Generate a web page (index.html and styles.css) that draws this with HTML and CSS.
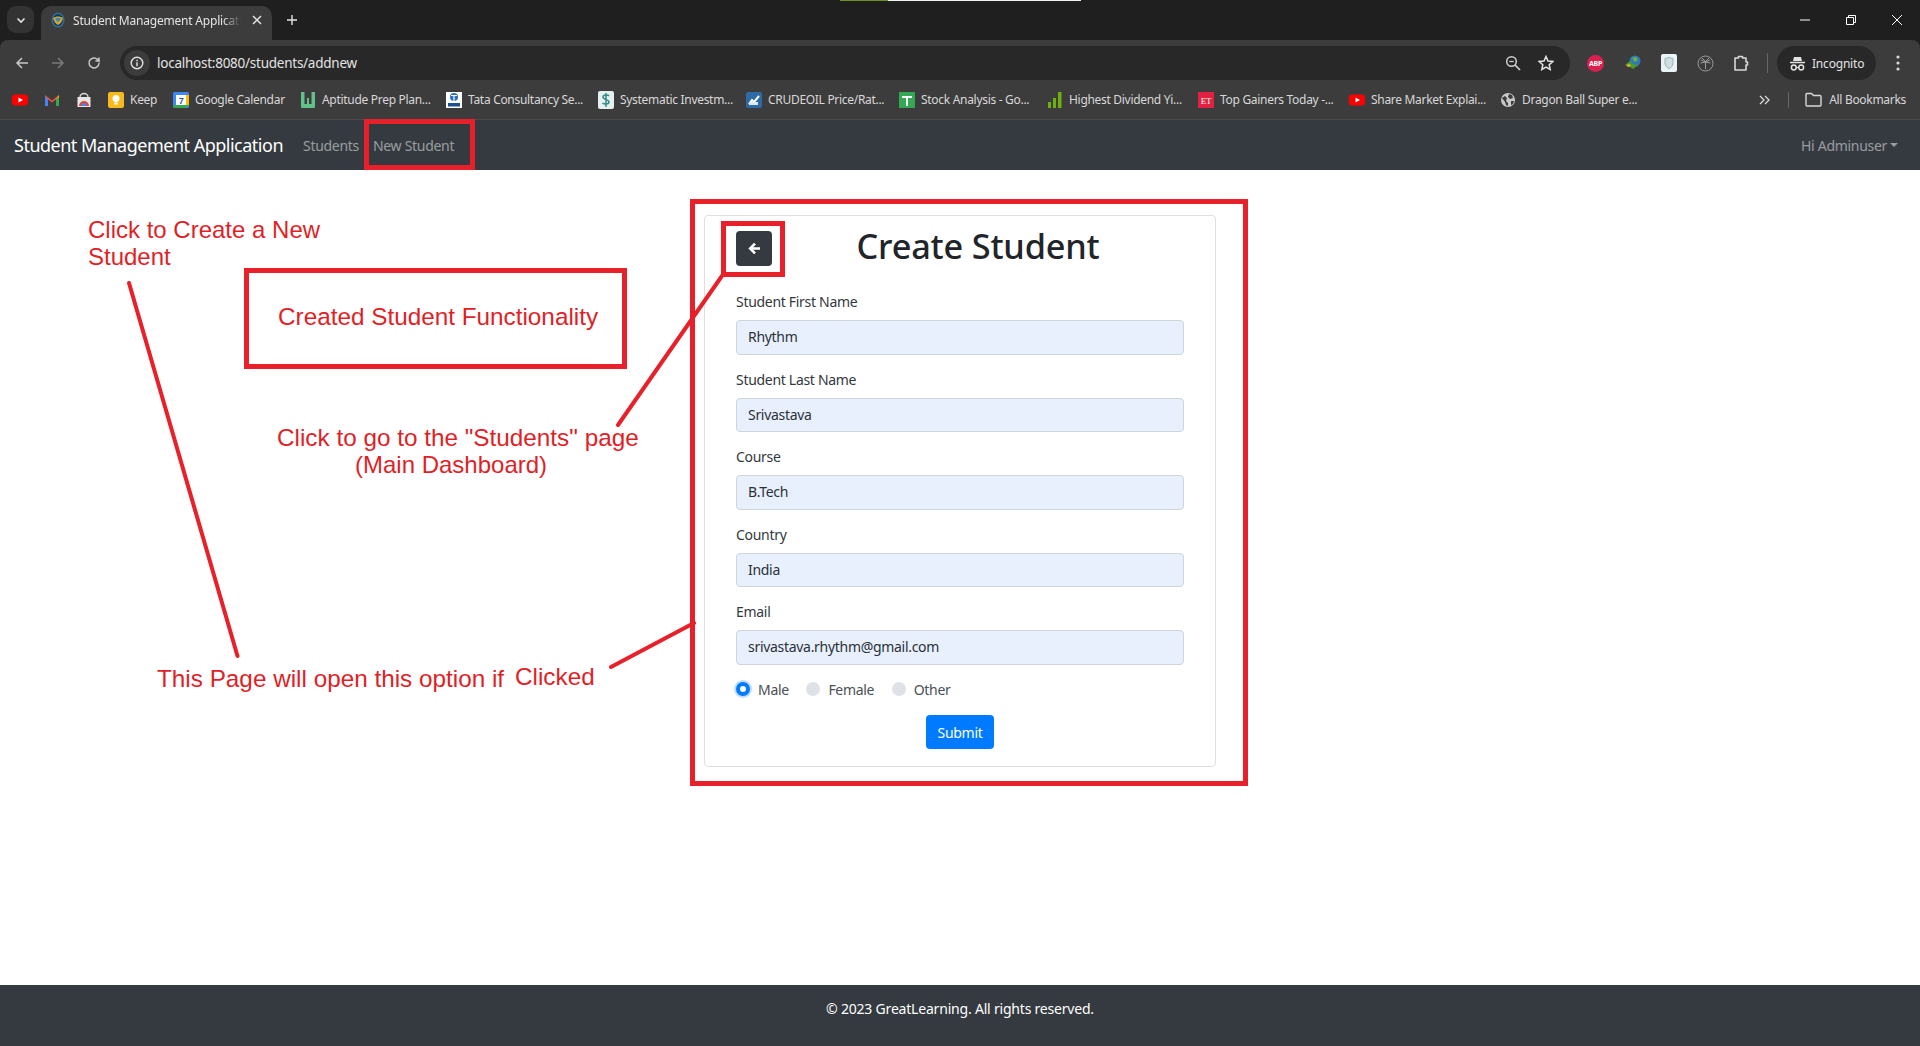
FILE: index.html
```html
<!DOCTYPE html>
<html lang="en">
<head>
<meta charset="utf-8">
<title>Student Management Application</title>
<link rel="stylesheet" href="styles.css">
</head>
<body>
<header class="chrome">
<div class="tabstrip">
  <div class="tab-search"><svg width="12" height="12" viewBox="0 0 12 12"><path d="M2.5 4.5 6 8l3.500-3.500" fill="none" stroke="#e3e3e3" stroke-width="1.600"/></svg></div>
  <div class="tab">
    <svg class="tab-fav" width="14" height="16" viewBox="0 0 14 16"><ellipse cx="7" cy="8" rx="6.500" ry="7.500" fill="#2f6f9c"/><ellipse cx="7" cy="8" rx="5" ry="6" fill="#123a55"/><path d="M2 6c3-2 7-2 10 0-1 4-3 6-5 7-2-1-4-3-5-7z" fill="#d8a52c"/><path d="M4 6.500c2-1 4-1 6 0-1 2-2 3-3 3.500-1-.5-2-1.500-3-3.500z" fill="#3f86b5"/></svg>
    <span class="tab-title">Student Management Application</span>
    <svg class="tab-close" width="10" height="10" viewBox="0 0 10 10"><path d="M1 1l8 8M9 1 1 9" stroke="#e3e3e3" stroke-width="1.500"/></svg>
  </div>
  <svg class="tab-new" width="12" height="12" viewBox="0 0 12 12"><path d="M6 1v10M1 6h10" stroke="#e3e3e3" stroke-width="1.400"/></svg>
  <div class="win-controls">
    <svg width="12" height="12" viewBox="0 0 12 12"><path d="M1 6h10" stroke="#fff"/></svg>
    <svg width="12" height="12" viewBox="0 0 12 12"><path d="M1.500 3.500h7v7h-7zM3.500 3.500v-2h7v7h-2" fill="none" stroke="#fff"/></svg>
    <svg width="12" height="12" viewBox="0 0 12 12"><path d="M1 1l10 10M11 1 1 11" stroke="#fff"/></svg>
  </div>
</div>

<div class="toolbar">
  <div class="nav-buttons">
    <svg width="14" height="14" viewBox="0 0 14 14"><path d="M13 7H2M7 2 2 7l5 5" fill="none" stroke="#c7c7c7" stroke-width="1.500"/></svg>
    <svg width="14" height="14" viewBox="0 0 14 14"><path d="M1 7h11M7 2l5 5-5 5" fill="none" stroke="#7a7a7a" stroke-width="1.500"/></svg>
    <svg width="14" height="14" viewBox="0 0 14 14"><path d="M12 7a5 5 0 1 1-1.500-3.600L12 5V1.500M12 5H8.500" fill="none" stroke="#c7c7c7" stroke-width="1.500"/></svg>
  </div>
  <div class="omnibox">
    <div class="info-chip"><svg width="14" height="14" viewBox="0 0 14 14"><circle cx="7" cy="7" r="5.800" fill="none" stroke="#e3e3e3" stroke-width="1.400"/><path d="M7 6.200v4M7 3.800v1.400" stroke="#e3e3e3" stroke-width="1.400"/></svg></div>
    <span class="url">localhost:8080/students/addnew</span>
    <div class="omni-actions">
      <svg width="16" height="16" viewBox="0 0 16 16"><circle cx="6.500" cy="6.500" r="4.800" fill="none" stroke="#d0d0d0" stroke-width="1.500"/><path d="M10 10l5 5" stroke="#d0d0d0" stroke-width="1.700"/><path d="M4.300 6.500h4.400" stroke="#d0d0d0" stroke-width="1.200"/></svg>
      <svg width="16" height="16" viewBox="0 0 16 16"><path d="M8 1.500l2 4.500 4.800.5-3.600 3.200 1 4.800L8 12.100l-4.200 2.400 1-4.800-3.600-3.200L6 6z" fill="none" stroke="#e3e3e3" stroke-width="1.500"/></svg>
    </div>
  </div>
  <div class="extensions">
    <div class="ext-abp">ABP</div>
    <svg width="18" height="18" viewBox="0 0 18 18"><circle cx="11" cy="7" r="5.500" fill="#2f79b9"/><path d="M8 4l4-1 2 3-3 2z" fill="#6cb33f"/><path d="M1 11l5-4 3 3 5 1-5 4-3-2z" fill="#4b9a2f"/><path d="M2 11l4-1 1 2-3 1z" fill="#e6b12a"/></svg>
    <div class="ext-shield"><svg width="10" height="12" viewBox="0 0 10 12"><path d="M1 1.500 5 .5l4 1V6c0 3-2 4.500-4 5.500C3 10.500 1 9 1 6z" fill="#d0dfe4" stroke="#9fb2b8"/></svg></div>
    <svg width="17" height="17" viewBox="0 0 17 17"><circle cx="8.500" cy="8.500" r="7.500" fill="none" stroke="#9b9b9b"/><path d="M8.500 6v8M4 5l4.500 2L13 5M3.500 8l5-1 5 1M5 3l3.500 3.500L12 3" fill="none" stroke="#9b9b9b"/></svg>
    <svg width="16" height="18" viewBox="0 0 16 18"><path d="M2 4h3.500V2.500h4V4H13v4h1.500v3H13v5H2z" fill="none" stroke="#d8d8d8" stroke-width="1.600" stroke-linejoin="round"/></svg>
  </div>
  <div class="toolbar-sep"></div>
  <div class="incognito">
    <svg width="17" height="17" viewBox="0 0 17 17"><path d="M5 2h7l1 4H4z" fill="#e3e3e3"/><path d="M1 7.500h15" stroke="#e3e3e3" stroke-width="1.500"/><circle cx="4.800" cy="12.500" r="2.400" fill="none" stroke="#e3e3e3" stroke-width="1.500"/><circle cx="12.200" cy="12.500" r="2.400" fill="none" stroke="#e3e3e3" stroke-width="1.500"/><path d="M7.200 12.500h2.600" stroke="#e3e3e3" stroke-width="1.200"/></svg>
    <span>Incognito</span>
  </div>
  <svg class="menu-dots" width="4" height="16" viewBox="0 0 4 16"><circle cx="2" cy="2" r="1.600" fill="#d8d8d8"/><circle cx="2" cy="8" r="1.600" fill="#d8d8d8"/><circle cx="2" cy="14" r="1.600" fill="#d8d8d8"/></svg>
</div>

<div class="bookmarks">
  <div class="bm"><svg width="16" height="16" viewBox="0 0 16 16"><rect y="2.500" width="16" height="11" rx="3" fill="#f00"/><path d="M6.500 5.500 11 8l-4.500 2.500z" fill="#fff"/></svg></div>
  <div class="bm"><svg width="16" height="16" viewBox="0 0 16 16"><path d="M1 14V3l7 5.500L15 3v11h-3V7.500L8 10.500 4 7.500V14z" fill="#e8543f"/><path d="M1 14V4l3 3.500V14z" fill="#4285f4"/><path d="M12 14V7.500L15 4v10z" fill="#34a853"/><path d="M12 7.500 15 3v2z" fill="#fbbc05"/></svg></div>
  <div class="bm"><svg width="16" height="16" viewBox="0 0 16 16"><rect x="1.500" y="5" width="13" height="10" fill="#e6e6e6"/><path d="M4 5a4 3.500 0 0 1 8 0" fill="none" stroke="#ddd" stroke-width="1.300"/><path d="M3 14a5 5 0 0 1 10 0z" fill="#d9483b"/><path d="M5.500 14a2.500 3 0 0 1 5 0z" fill="#4285f4"/></svg></div>
  <div class="bm"><svg width="16" height="16" viewBox="0 0 16 16"><rect width="16" height="16" rx="2" fill="#f7b91d"/><circle cx="8" cy="6.500" r="3.500" fill="#fff"/><rect x="6.300" y="10.500" width="3.400" height="2" fill="#fff"/></svg><span class="bm-label w-keep">Keep</span></div>
  <div class="bm"><svg width="16" height="16" viewBox="0 0 16 16"><rect width="16" height="16" rx="1.500" fill="#4285f4"/><rect x="3" y="3" width="10" height="10" fill="#fff"/><path d="M12 16v-3h4l-3 3zM0 13h3v3H1zM3 13h9v3H3z" fill="#34a853"/><path d="M13 3h3v10h-3z" fill="#fbbc05"/><text x="8" y="11.500" class="cal-day">7</text></svg><span class="bm-label w-cal">Google Calendar</span></div>
  <div class="bm"><svg width="16" height="18" viewBox="0 0 16 18"><path d="M1 1h3.500v12h7V1H15v15a1 1 0 0 1-1 1H2a1 1 0 0 1-1-1z" fill="#62c08b"/><path d="M7 7h2v6H7z" fill="#62c08b"/></svg><span class="bm-label w-apt">Aptitude Prep Plan...</span></div>
  <div class="bm"><svg width="16" height="16" viewBox="0 0 16 16"><rect width="16" height="16" fill="#fff"/><circle cx="8" cy="5" r="4" fill="#2d6fb7"/><path d="M5 3.500h6M8 3.500V9" stroke="#fff" stroke-width="1.200"/><rect x="2" y="11" width="12" height="3.500" fill="#1f4f8f"/></svg><span class="bm-label w-tcs">Tata Consultancy Se...</span></div>
  <div class="bm"><svg width="16" height="18" viewBox="0 0 16 18"><rect width="16" height="18" rx="2" fill="#e7f0ef"/><path d="M11 5c-1-1.500-6-1.500-6 1 0 3 6 2 6 5 0 2.500-5 2.500-6.500 1M8 2v14" fill="none" stroke="#2e8d8d" stroke-width="1.500"/></svg><span class="bm-label w-sys">Systematic Investm...</span></div>
  <div class="bm"><svg width="16" height="18" viewBox="0 0 16 18"><rect y="1" width="16" height="16" rx="2" fill="#2f6aa8"/><path d="M3 13l3-4 2 2 5-6" stroke="#fff" stroke-width="2" fill="none"/><rect x="3" y="11" width="9" height="3" fill="#dfe9f3"/></svg><span class="bm-label w-cru">CRUDEOIL Price/Rat...</span></div>
  <div class="bm"><svg width="16" height="18" viewBox="0 0 16 18"><rect y="1" width="16" height="16" rx="1" fill="#34a853"/><path d="M3 6h10M8 6v9" stroke="#fff" stroke-width="2"/></svg><span class="bm-label w-sto">Stock Analysis - Go...</span></div>
  <div class="bm"><svg width="16" height="18" viewBox="0 0 16 18"><path d="M1 11h3v6H1zM6 7h3v10H6zM11 1h3.500v16H11z" fill="#6fb010"/></svg><span class="bm-label w-hig">Highest Dividend Yi...</span></div>
  <div class="bm"><svg width="16" height="18" viewBox="0 0 16 18"><rect y="1" width="16" height="16" fill="#e0213f"/><text x="8" y="13" class="et-mark">ET</text></svg><span class="bm-label w-top">Top Gainers Today -...</span></div>
  <div class="bm"><svg width="16" height="16" viewBox="0 0 16 16"><rect y="2.500" width="16" height="11" rx="3" fill="#f00"/><path d="M6.500 5.500 11 8l-4.500 2.500z" fill="#fff"/></svg><span class="bm-label w-sha">Share Market Explai...</span></div>
  <div class="bm"><svg width="16" height="16" viewBox="0 0 16 16"><circle cx="8" cy="8" r="7" fill="#c8c8c8"/><path d="M2 6l3-2 2 2-1 3 2 2v3l-2-1-1-3zM9 2l3 1 1 3-3 1-2-2zM11 9l3 0-1 3-2 1z" fill="#3c3c3c"/></svg><span class="bm-label w-dra">Dragon Ball Super e...</span></div>
  <div class="bm-end">
    <svg width="11" height="10" viewBox="0 0 11 10"><path d="M1 1l4 4-4 4M6 1l4 4-4 4" fill="none" stroke="#d8d8d8" stroke-width="1.300"/></svg>
    <div class="bm-sep"></div>
    <svg width="17" height="15" viewBox="0 0 17 15"><path d="M1 2.500a1 1 0 0 1 1-1h4.500l2 2H15a1 1 0 0 1 1 1V13a1 1 0 0 1-1 1H2a1 1 0 0 1-1-1z" fill="none" stroke="#d8d8d8" stroke-width="1.400"/></svg>
    <span class="bm-all">All Bookmarks</span>
  </div>
</div>
</header>

<nav class="navbar">
  <a class="brand">Student Management Application</a>
  <a class="nav-link">Students</a>
  <a class="nav-link">New Student</a>
  <a class="nav-link nav-user">Hi Adminuser<span class="caret"></span></a>
</nav>

<main class="content">
  <form class="card">
    <div class="card-head">
      <a class="back-btn"><svg width="13" height="13" viewBox="0 0 13 13"><path d="M12 6.500H3M7 1.700 2.200 6.500 7 11.300" fill="none" stroke="#fff" stroke-width="2.600"/></svg></a>
      <h1 class="card-title">Create Student</h1>
    </div>
    <div class="field"><label class="field-label">Student First Name</label><div class="field-input">Rhythm</div></div>
    <div class="field"><label class="field-label">Student Last Name</label><div class="field-input">Srivastava</div></div>
    <div class="field"><label class="field-label">Course</label><div class="field-input">B.Tech</div></div>
    <div class="field"><label class="field-label">Country</label><div class="field-input">India</div></div>
    <div class="field"><label class="field-label">Email</label><div class="field-input">srivastava.rhythm@gmail.com</div></div>
    <div class="radios">
      <span class="radio radio-on"></span><span class="radio-label">Male</span>
      <span class="radio"></span><span class="radio-label">Female</span>
      <span class="radio"></span><span class="radio-label">Other</span>
    </div>
    <div class="submit-row"><button type="button" class="submit">Submit</button></div>
  </form>
</main>

<footer class="footer">© 2023 GreatLearning. All rights reserved.</footer>

<div class="marks">
  <svg class="marks-lines" width="1920" height="1046" viewBox="0 0 1920 1046">
    <path d="M129 283 237.500 656M618 425 724 273M611 667 694 623" fill="none" stroke="#e8202a" stroke-width="4" stroke-linecap="round"/>
  </svg>
  <div class="box box-nav"></div>
  <div class="box box-form"></div>
  <div class="box box-back"></div>
  <div class="box box-title"></div>
  <div class="note note-create">Click to Create a New<br>Student</div>
  <div class="note note-title">Created Student Functionality</div>
  <div class="note note-back">Click to go to the "Students" page</div>
  <div class="note note-dash">(Main Dashboard)</div>
  <div class="note note-page">This Page will open this option if</div>
  <div class="note note-clicked">Clicked</div>
</div>
</body>
</html>
```

FILE: styles.css
```css
* { box-sizing: border-box; }
html, body { margin: 0; height: 100%; }
body {
  width: 1920px;
  height: 1046px;
  overflow: hidden;
  position: relative;
  display: flex;
  flex-direction: column;
  background: #fff;
  font-family: "Noto Sans", "Open Sans", sans-serif;
  color: #212529;
}

/* browser chrome */
.chrome { flex: none; background: #1f1f1f; }
.tabstrip {
  height: 40px;
  display: flex;
  align-items: flex-end;
  position: relative;
}
.tabstrip::before {
  content: "";
  position: absolute;
  top: 0;
  left: 840px;
  width: 241px;
  height: 1px;
  background: linear-gradient(to right, #6b8f23 0 48px, #f2f2f2 48px);
}
.tab-search {
  width: 27px;
  height: 27px;
  margin: 0 7px 7px 7px;
  border-radius: 9px;
  background: #333;
  display: flex;
  align-items: center;
  justify-content: center;
}
.tab {
  width: 231px;
  height: 34px;
  background: #3c3c3c;
  border-radius: 10px 10px 0 0;
  display: flex;
  align-items: center;
  padding: 0 10px 6px;
  color: #e3e3e3;
  font-size: 12px;
}
.tab-fav { flex: none; margin-right: 8px; }
.tab-title {
  width: 168px;
  overflow: hidden;
  white-space: nowrap;
  letter-spacing: -0.2px;
  -webkit-mask-image: linear-gradient(to right, #000 150px, transparent 168px);
  mask-image: linear-gradient(to right, #000 150px, transparent 168px);
}
.tab-close { margin-left: 11px; }
.tab-new { margin: 0 0 14px 14px; }
.win-controls {
  margin-left: auto;
  display: flex;
  gap: 34px;
  padding: 0 17px 14px 0;
}
.toolbar {
  height: 40px;
  background: #3c3c3c;
  display: flex;
  align-items: flex-start;
  padding-top: 6px;
  border-radius: 8px 8px 0 0;
}
.nav-buttons {
  width: 120px;
  height: 34px;
  display: flex;
  align-items: center;
  gap: 22px;
  padding-left: 15px;
}
.omnibox {
  width: 1450px;
  height: 34px;
  border-radius: 17px;
  background: #282828;
  display: flex;
  align-items: center;
  color: #e3e3e3;
  font-size: 13.500px;
  padding-left: 4px;
}
.info-chip {
  width: 26px;
  height: 26px;
  border-radius: 50%;
  background: #3c3c3c;
  display: flex;
  align-items: center;
  justify-content: center;
  margin-right: 7px;
}
.url { letter-spacing: -0.25px; margin-bottom: 1px; }
.omni-actions {
  margin-left: auto;
  display: flex;
  gap: 17px;
  padding-right: 16px;
}
.extensions {
  width: 208px;
  height: 34px;
  display: flex;
  align-items: center;
  gap: 19.500px;
  padding-left: 17px;
}
.ext-abp {
  width: 17px;
  height: 17px;
  border-radius: 50%;
  background: #d9204f;
  color: #fff;
  font-size: 7px;
  font-weight: 700;
  display: flex;
  align-items: center;
  justify-content: center;
  letter-spacing: -0.3px;
}
.ext-shield {
  width: 16px;
  height: 18px;
  border-radius: 2px;
  background: #e9f4f7;
  display: flex;
  align-items: center;
  justify-content: center;
}
.toolbar-sep {
  width: 1px;
  height: 20px;
  margin: 7px 9px 0 -11px;
  background: #666;
}
.incognito {
  width: 99px;
  height: 34px;
  border-radius: 17px;
  background: #282828;
  color: #e3e3e3;
  font-size: 12px;
  display: flex;
  align-items: center;
  gap: 6px;
  padding-left: 12px;
  letter-spacing: -0.2px;
}
.menu-dots { margin: 9px 0 0 20px; }

.bookmarks {
  height: 40px;
  background: #3c3c3c;
  border-bottom: 1px solid #4b4b4b;
  display: flex;
  align-items: center;
  padding-left: 12px;
  gap: 16px;
  color: #d8d8d8;
  font-size: 12px;
  letter-spacing: -0.3px;
}
.bm {
  display: flex;
  align-items: center;
  gap: 6px;
  white-space: nowrap;
}
.bm svg { flex: none; }
.bm-label { display: block; }
.w-keep { width: 27px; }
.w-cal { width: 89px; }
.w-apt { width: 108px; }
.w-tcs { width: 114px; }
.w-sys { width: 110px; }
.w-cru { width: 115px; }
.w-sto { width: 110px; }
.w-hig { width: 113px; }
.w-top { width: 113px; }
.w-sha { width: 113px; }
.w-dra { width: 114px; }
.cal-day { font-size: 9px; font-weight: 700; fill: #1a56c4; text-anchor: middle; font-family: "Liberation Sans", sans-serif; }
.et-mark { font-size: 9px; fill: #fff; text-anchor: middle; font-family: "Liberation Serif", serif; }
.bm-end {
  margin-left: auto;
  display: flex;
  align-items: center;
  padding-right: 14px;
}
.bm-sep { width: 1px; height: 16px; background: #666; margin: 0 16px 0 18px; }
.bm-all { margin-left: 7px; }

/* application */
.navbar {
  height: 50px;
  flex: none;
  background: #343a40;
  display: flex;
  align-items: center;
  padding: 0 22px 0 14px;
  font-size: 14px;
}
.brand {
  color: #fff;
  font-size: 18px;
  margin-right: 20px;
  letter-spacing: -0.5px;
}
.nav-link { color: rgba(255, 255, 255, .5); margin-right: 14px; letter-spacing: -0.3px; }
.nav-user { margin: 0 0 0 auto; display: flex; align-items: center; }
.caret {
  width: 0;
  height: 0;
  margin-left: 3px;
  border-top: 4px solid rgba(255, 255, 255, .5);
  border-left: 4px solid transparent;
  border-right: 4px solid transparent;
}
.content {
  flex: 1;
  padding-top: 45px;
  display: flex;
  justify-content: center;
  align-items: flex-start;
}
.card {
  width: 512px;
  height: 552px;
  border: 1px solid #dfdfdf;
  border-radius: 4px;
  padding: 15px 31px 0;
  font-size: 14px;
}
.card-head {
  display: flex;
  align-items: center;
  height: 35px;
  margin-bottom: 25px;
}
.back-btn {
  width: 36px;
  height: 35px;
  flex: none;
  border-radius: 4px;
  background: #343a40;
  display: flex;
  align-items: center;
  justify-content: center;
}
.card-title {
  flex: 1;
  margin: 0;
  text-align: center;
  font-size: 34.300px;
  font-weight: 500;
  line-height: 35px;
  letter-spacing: -0.2px;
  position: relative;
  top: -3px;
}
.field { margin-bottom: 14px; }
.field-label {
  display: block;
  line-height: 21px;
  margin-bottom: 8px;
  letter-spacing: -0.3px;
  color: #33383d;
}
.field-input {
  height: 34.500px;
  line-height: 32.500px;
  padding: 0 11px;
  background: #e8f0fe;
  border: 1px solid #ced4da;
  border-radius: 4px;
  color: #2c3136;
  letter-spacing: -0.3px;
}
.radios {
  display: flex;
  align-items: center;
  height: 21px;
  margin-bottom: 15.500px;
  color: #495057;
  letter-spacing: -0.3px;
}
.radio {
  width: 14px;
  height: 14px;
  border-radius: 50%;
  background: #dee2e6;
  flex: none;
}
.radio-on {
  background: #fff;
  border: 4px solid #007bff;
  box-shadow: 0 0 0 2px rgba(0, 123, 255, .25);
}
.radio-label { margin: 0 17.500px 0 8px; }
.submit-row { display: flex; justify-content: center; }
.submit {
  width: 68px;
  height: 34px;
  border: 0;
  border-radius: 4px;
  background: #007bff;
  color: #fff;
  font: inherit;
  letter-spacing: -0.3px;
  padding: 0;
}
.footer {
  height: 61px;
  flex: none;
  background: #343a40;
  color: #fff;
  font-size: 14px;
  text-align: center;
  padding-top: 14px;
  letter-spacing: -0.2px;
}

/* hand-drawn annotations over the screenshot */
.marks {
  position: absolute;
  inset: 0;
  pointer-events: none;
  font-family: "Liberation Sans", Arial, sans-serif;
  color: #e01f28;
}
.marks-lines { position: absolute; top: 0; left: 0; }
.box { position: absolute; border: 5px solid #e8202a; }
.box-nav { left: 364px; top: 119px; width: 111px; height: 51px; }
.box-form { left: 690px; top: 199px; width: 558px; height: 587px; }
.box-back { left: 721px; top: 221px; width: 64px; height: 56px; }
.box-title { left: 244px; top: 268px; width: 383px; height: 101px; }
.note { position: absolute; white-space: nowrap; font-size: 24.300px; line-height: 27px; }
.note-create { left: 88px; top: 216px; font-size: 24px; }
.note-title { left: 278px; top: 303px; }
.note-back { left: 277px; top: 424px; }
.note-dash { left: 355px; top: 451px; font-size: 24px; }
.note-page { left: 157px; top: 665px; }
.note-clicked { left: 515px; top: 663px; }
```
